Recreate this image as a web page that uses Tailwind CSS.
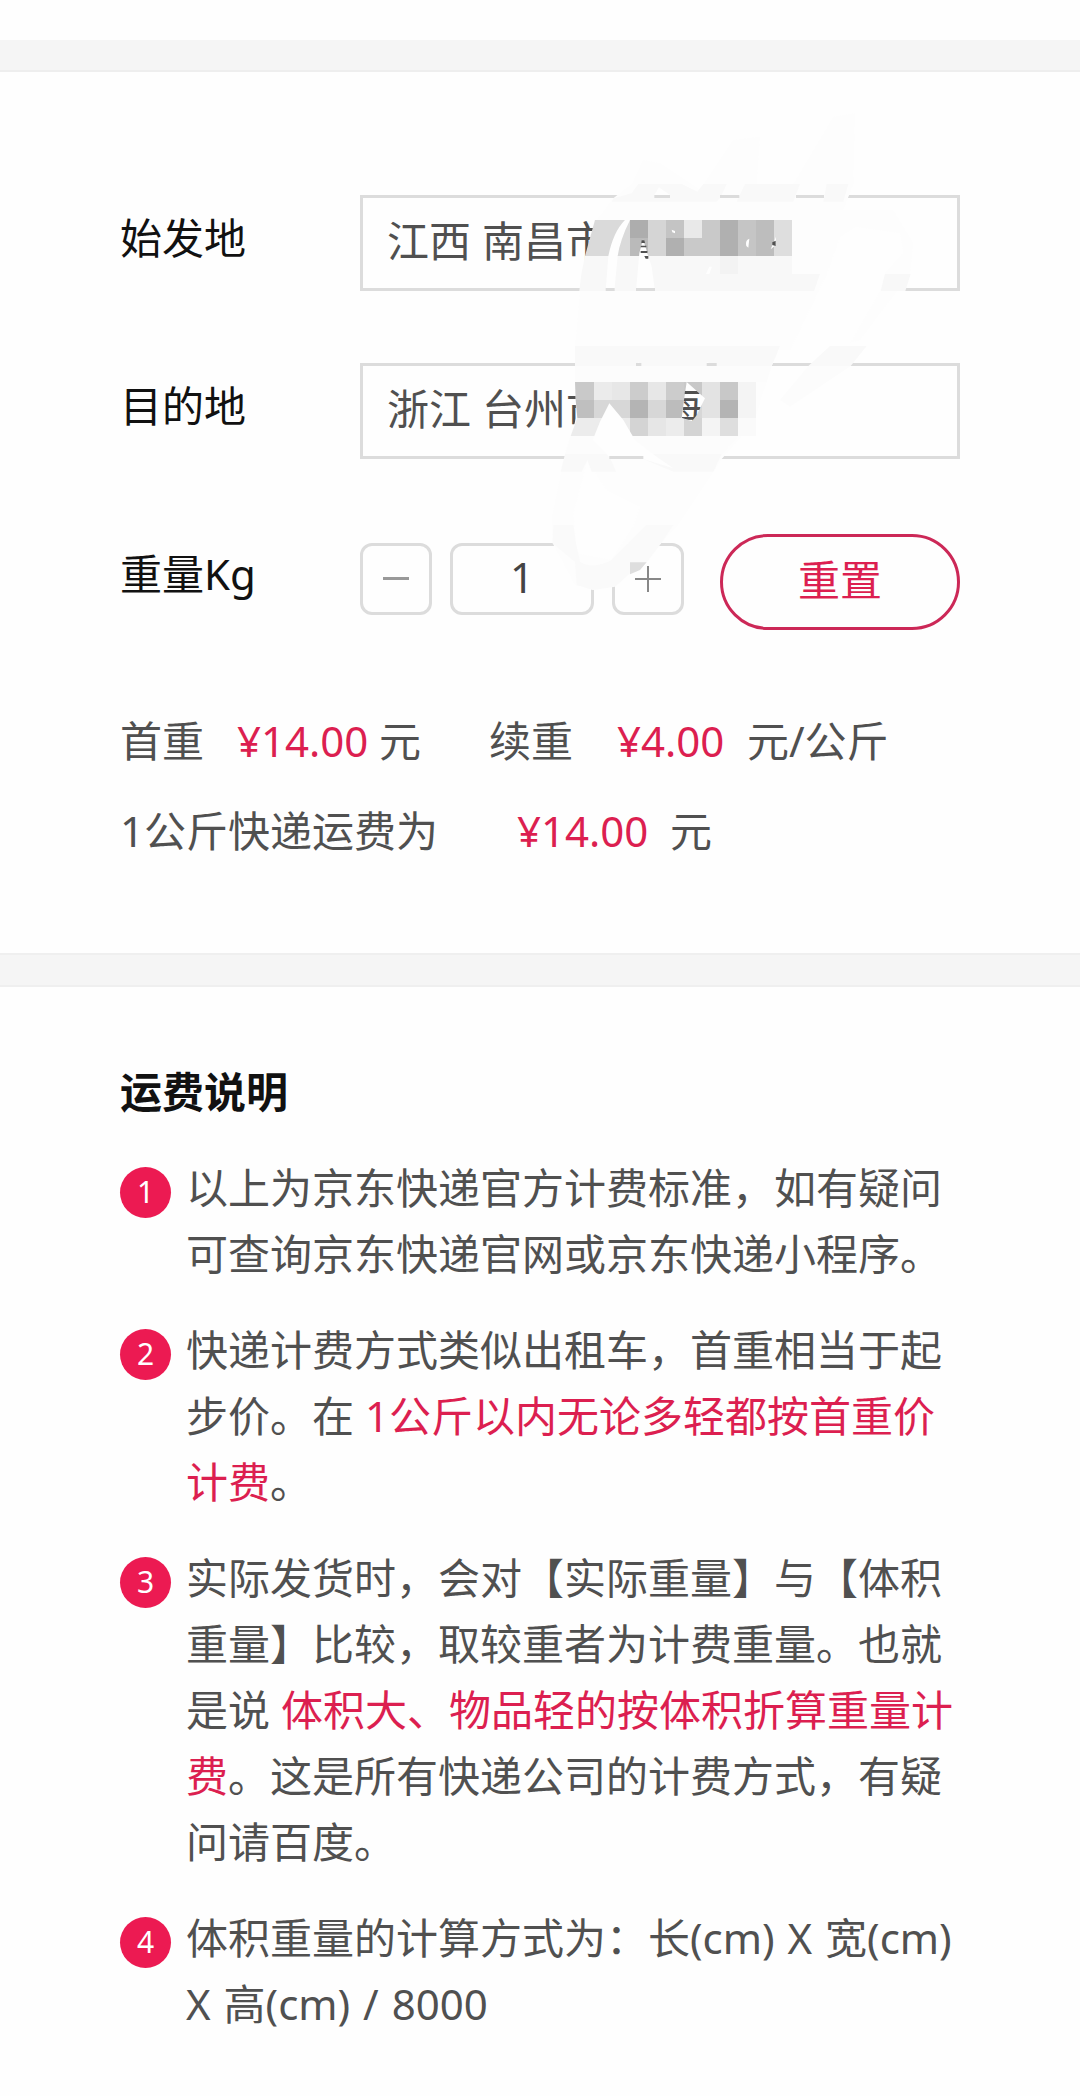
<!DOCTYPE html>
<html lang="zh-CN">
<head>
  <meta charset="UTF-8" />
  <meta name="viewport" content="width=device-width, initial-scale=1" />
  <title>运费查询</title>
  <script src="https://cdn.jsdelivr.net/npm/@tailwindcss/browser@4"></script>
</head>
<body class="bg-[#fefefe] font-['Noto_Sans','Noto_Sans_CJK_SC',sans-serif] text-[42px] leading-[66px] text-[#505050] overflow-x-hidden">

  <div class="h-10"></div>
  <div class="h-8 bg-[#f5f5f5] border-b-2 border-[#eeeeee]"></div>

  <!-- Freight form -->
  <section class="relative h-[881px] px-[120px] pt-[123px]">
    <form class="flex flex-col gap-[72px]">
      <div class="flex">
        <label class="w-60 leading-[86px] text-[#111]">始发地</label>
        <div class="w-[600px] h-24 border-3 border-[#dcdcdc] pl-6 leading-[86px] whitespace-nowrap">江西 南昌市</div>
      </div>
      <div class="flex">
        <label class="w-60 leading-[86px] text-[#111]">目的地</label>
        <div class="w-[600px] h-24 border-3 border-[#dcdcdc] pl-6 leading-[86px] whitespace-nowrap">浙江 台州市</div>
      </div>
      <div class="flex">
        <label class="w-60 leading-[86px] text-[#111]">重量Kg</label>
        <div class="flex items-center gap-[18px] h-24">
          <button type="button" class="w-[72px] h-[72px] border-3 border-[#dcdcdc] rounded-xl flex items-center justify-center">
            <svg class="w-7 h-7" viewBox="0 0 28 28" stroke="#999" stroke-width="3"><path d="M1 13.5h26" /></svg>
          </button>
          <div class="w-36 h-[72px] border-3 border-[#dcdcdc] rounded-xl text-center leading-[62px] text-[#444]">1</div>
          <button type="button" class="w-[72px] h-[72px] border-3 border-[#dcdcdc] rounded-xl flex items-center justify-center">
            <svg class="w-7 h-7" viewBox="0 0 28 28" stroke="#888" stroke-width="2"><path d="M1 14h26M14 1v26" /></svg>
          </button>
        </div>
        <button type="button" class="mt-[3px] ml-9 w-60 h-24 border-3 border-[#cc2857] rounded-full text-[#dc1f50] pb-1 leading-[82px]">重置</button>
      </div>
    </form>

    <div class="mt-[78px] flex whitespace-nowrap">
      <span class="w-[117px]">首重</span>
      <span class="w-[142px] text-[#dc1f50]">¥14.00</span>
      <span class="w-[110px]">元</span>
      <span class="w-[128px]">续重</span>
      <span class="w-[130px] text-[#dc1f50]">¥4.00</span>
      <span>元/公斤</span>
    </div>
    <div class="mt-6 flex whitespace-nowrap">
      <span class="w-[397px]">1公斤快递运费为</span>
      <span class="w-[153px] text-[#dc1f50]">¥14.00</span>
      <span>元</span>
    </div>

    <!-- Mosaic brush over the street part of both addresses -->
    <svg class="absolute inset-0 w-full h-full pointer-events-none" viewBox="0 72 1080 881">
      <g transform="translate(560 110) scale(.33333)">
        <path fill="#fdfdfd" d="M250 150L300 160L420 240L520 90L600 80L590 222L700 222L820 20L885 10L880 222L850 300H1000L1060 400L1050 492L900 690L800 720H45L60 542L110 330L160 265L215 222Z" />
        <path fill="#fefefe" d="M885 350L1020 370L1030 430L975 492L962 542L860 720H690L800 492L840 380Z" />
        <path fill="#f9f9f9" d="M235 222H365L412 245L430 222H500L482 262L470 275H155L160 265L215 250Z M555 222H720L700 275H530Z M800 222H865L850 275H790Z" />
        <path fill="#fefefe" d="M297 232L283 255V264H330V255Z" />
        <path fill="#dcdcdc" d="M283 255H330V264H283Z M480 255H538V264H480Z M708 255H792V264H708Z" />
        <path fill="#f8f8f8" d="M75 438H696V492H780L762 543H58L64 492Z M975 492H1052L1036 543H962Z" />
        <path fill="#f3f3f3" d="M480 438h54v54h-54Z" />
        <path fill="#dadada" d="M105 330H210V438H75Z" />
        <path fill="#adadad" d="M210 330h54v54h-54Z" />
        <path fill="#bababa" d="M210 384h54v54h-54Z" />
        <path fill="#d5d5d5" d="M264 330h54v108h-54Z" />
        <path fill="#c4c4c4" d="M318 330h54v54h-54Z" />
        <path fill="#b0b0b0" d="M318 384h54v54h-54Z" />
        <path fill="#e9e9e9" d="M372 330h54v54h-54Z" />
        <path fill="#c9c9c9" d="M372 384h54v54h-54Z M426 330h54v108h-54Z" />
        <path fill="#b0b0b0" d="M480 330h54v108h-54Z" />
        <path fill="#c5c5c5" d="M534 330h54v108h-54Z" />
        <path fill="#bdbdbd" d="M588 330h54v108h-54Z" />
        <path fill="#dedede" d="M642 330h54v108h-54Z" />
        <path fill="#fefefe" d="M145 438Q160 365 195 330H210Q180 390 173 438L163 543H137Z M249 388L275 470L285 543H228L238 430Z M568 386Q555 390 559 408L565 413Z M648 380L632 418L648 405Z M335 359l10 4v7l-8-3Z M448 470l-10 22h10l8-22Z" />
        <path fill="#505050" d="M245 391h8l2 8h-11Z M243 407h16v5h-17Z M242 423h20v6h-20Z M253 438h12v8h-8Z M637 397l10-5v16l-10-3Z" />
        <path fill="#dcdcdc" d="M137 534h27v9h-27Z M228 534h57v9h-57Z" />
      </g>
      <g transform="translate(540 340) scale(.33333)">
        <path fill="#fdfdfd" d="M105 0H730L695 78L640 250L545 357L410 560L360 612L270 700L160 750L105 735L38 610V520L65 390L108 235Z" />
        <path fill="#fefefe" d="M142 360L200 450L300 500L280 560L215 660L110 640L100 520Z" />
        <path fill="#f9f9f9" d="M105 18H720L695 78H530L500 65V78H305L295 66L288 78H105Z M870 18H980L932 78H805Z" />
        <path fill="#fcfcfc" d="M105 78H695L680 126H105Z M805 78H932L750 200L720 180Z" />
        <path fill="#dcdcdc" d="M288 69h16v9h-16Z M500 69h30v9h-30Z" />
        <path fill="#c9c9c9" d="M105 126h57v54h-55Z" />
        <path fill="#ebebeb" d="M162 126h54v54h-54Z" />
        <path fill="#e7e7e7" d="M216 126h54v54h-54Z M324 126h54v54h-54Z" />
        <path fill="#cccccc" d="M270 126h54v54h-54Z M378 126h54v54h-54Z" />
        <path fill="#c8c8c8" d="M432 126h54v54h-54Z M540 126h54v54h-54Z" />
        <path fill="#e3e3e3" d="M486 126h54v108h-54Z" />
        <path fill="#f4f4f4" d="M594 126h54v108h-54Z" />
        <path fill="#bfbfbf" d="M107 180h55v54h-50Z" />
        <path fill="#d7d7d7" d="M162 180h108v54h-108Z M324 180h54v54h-54Z M432 180h54v54h-54Z" />
        <path fill="#b4b4b4" d="M270 180h54v54h-54Z M540 180h54v54h-54Z" />
        <path fill="#bcbcbc" d="M378 180h54v54h-54Z" />
        <path fill="#ececec" d="M112 234h158v54h-178Z M378 234h54v54h-54Z" />
        <path fill="#d4d4d4" d="M270 234h54v54h-54Z M432 234h54v54h-54Z" />
        <path fill="#e6e6e6" d="M324 234h54v54h-54Z" />
        <path fill="#f4f4f4" d="M486 234h54v54h-54Z" />
        <path fill="#dedede" d="M540 234h54v54h-54Z" />
        <path fill="#fafafa" d="M594 234h54v54h-54Z" />
        <path fill="#fcfcfc" d="M92 288H594L545 342H75Z" />
        <path fill="#f9f9f9" d="M75 342H545L520 395H400L310 357L208 349L228 395H155L142 360L125 395H62Z" />
        <path fill="#fefefe" d="M208 190L180 245L158 300L205 349L310 357L400 385L350 350L285 300L250 240Z" />
        <path fill="#dcdcdc" d="M208 348H310V357H208Z" />
        <path fill="#fefefe" d="M440 126L495 175L470 225L455 243L425 235L432 180Z" />
        <path fill="#fafafa" d="M40 555H100L108 610L120 665Q160 690 215 660L320 555H400L362 612L320 667L270 700L225 740L160 750L110 735L105 665L38 610Z" />
        <path fill="#dedede" d="M270 667H320L300 690L270 703Z" />
        <path stroke="#888" stroke-width="6" d="M324 678V756M285 717H363" />
      </g>
      <clipPath id="gap"><path d="M686 382L705 398L697 415L692 421L682 418L684 400Z" /></clipPath>
      <text x="660" y="422" font-size="42" fill="#505050" clip-path="url(#gap)">海</text>
    </svg>
  </section>

  <div class="h-[34px] bg-[#f5f5f5] border-y-2 border-[#efefef]"></div>

  <!-- Notes -->
  <section class="px-[120px] pt-[72px]">
    <h2 class="font-bold text-[#111]">运费说明</h2>
    <ol class="mt-[30px] flex flex-col gap-[30px] whitespace-nowrap">
      <li class="flex gap-[15px]">
        <span class="mt-3 w-[51px] h-[51px] shrink-0 rounded-full bg-[#ec1a52] text-white text-[30px] leading-[50px] text-center">1</span>
        <p>以上为京东快递官方计费标准，如有疑问<br />可查询京东快递官网或京东快递小程序。</p>
      </li>
      <li class="flex gap-[15px]">
        <span class="mt-3 w-[51px] h-[51px] shrink-0 rounded-full bg-[#ec1a52] text-white text-[30px] leading-[50px] text-center">2</span>
        <p>快递计费方式类似出租车，首重相当于起<br />步价。在 <span class="text-[#dc1f50]">1公斤以内无论多轻都按首重价<br />计费</span>。</p>
      </li>
      <li class="flex gap-[15px]">
        <span class="mt-3 w-[51px] h-[51px] shrink-0 rounded-full bg-[#ec1a52] text-white text-[30px] leading-[50px] text-center">3</span>
        <p>实际发货时，会对【实际重量】与【体积<br />重量】比较，取较重者为计费重量。也就<br />是说 <span class="text-[#dc1f50]">体积大、物品轻的按体积折算重量计<br />费</span>。这是所有快递公司的计费方式，有疑<br />问请百度。</p>
      </li>
      <li class="flex gap-[15px]">
        <span class="mt-3 w-[51px] h-[51px] shrink-0 rounded-full bg-[#ec1a52] text-white text-[30px] leading-[50px] text-center">4</span>
        <p class="[word-spacing:2px]">体积重量的计算方式为：长(cm) X 宽(cm)<br />X 高(cm) / 8000</p>
      </li>
    </ol>
  </section>

</body>
</html>
